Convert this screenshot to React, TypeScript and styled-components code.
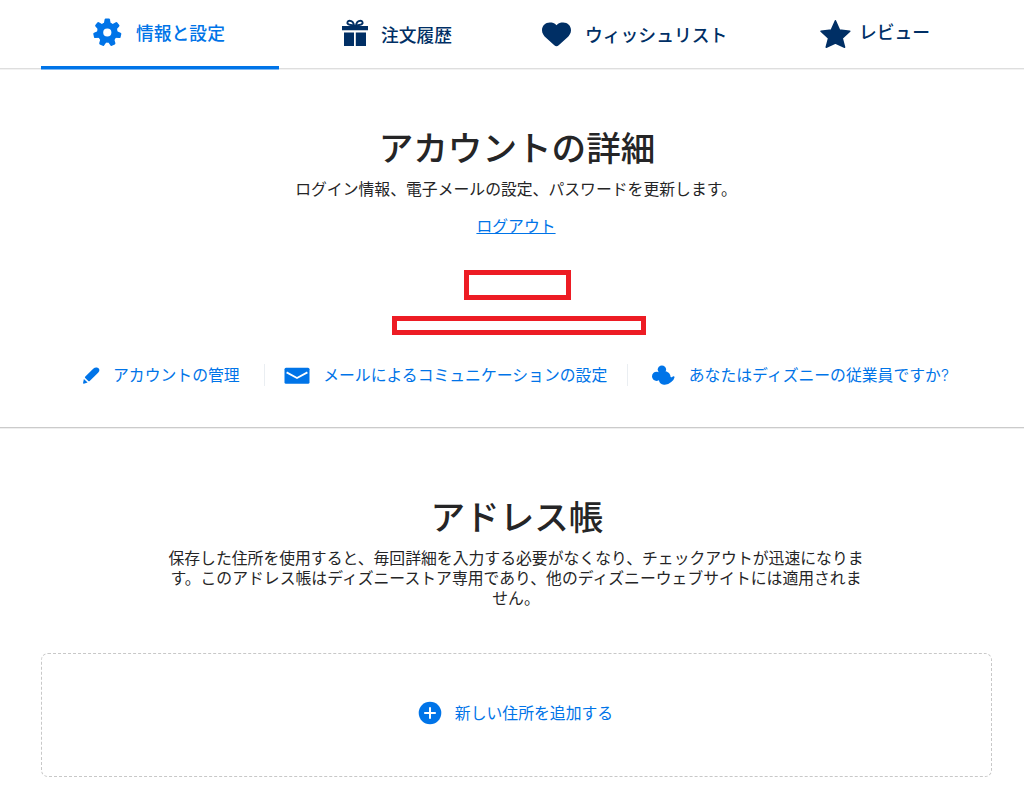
import styled, { createGlobalStyle } from 'styled-components'

const GlobalStyle = createGlobalStyle`
  * {
    box-sizing: border-box;
  }

  body {
    margin: 0;
    background: #fff;
    color: #252526;
    font-family: 'Noto Sans CJK JP', sans-serif;
    font-size: 15.84px;
  }
`

const Page = styled.div`
  width: 1024px;
  height: 799px;
  overflow: hidden;
`

const Nav = styled.nav`
  display: grid;
  grid-template-columns: repeat(4, 238px);
  height: 69px;
  padding-left: 41px;
  border-bottom: 1px solid #dedede;
  box-shadow: 0 1px #f2f2f2;
`

const Tab = styled.a<{ $active?: boolean; $indent: number; $gap: number }>`
  display: flex;
  align-items: flex-start;
  gap: ${props => props.$gap}px;
  height: 69px;
  padding-left: ${props => props.$indent}px;
  border-bottom: ${props => (props.$active ? '3px solid #0074e8' : 'none')};
  box-shadow: ${props => (props.$active ? '0 1px #7fb9f3' : 'none')};
  color: ${props => (props.$active ? '#0074e8' : '#002f65')};
  font-size: 17.8px;
  font-weight: 500;
  white-space: nowrap;

  svg {
    flex: none;
    margin-top: 18px;
  }
`

const TabLabel = styled.span<{ $top: number }>`
  margin-top: ${props => props.$top}px;
  line-height: 24px;
`

const Account = styled.section`
  display: flex;
  flex-direction: column;
  align-items: center;
  height: 359px;
  padding: 56px 33px 0 41px;
  border-bottom: 1px solid #cbcbcb;
  box-shadow: 0 1px #efefef;
`

const Title = styled.h1`
  margin: 0 0 0 2px;
  font-size: 34.6px;
  font-weight: 500;
  line-height: 42px;
`

const Text = styled.p`
  width: 706px;
  margin: 12px 0 0;
  line-height: 20px;
  text-align: center;
`

const Logout = styled.a`
  margin-top: 17px;
  color: #0074e8;
  line-height: 20px;
  text-decoration: underline;
`

const Redacted = styled.div<{ $width: number; $height: number; $top: number; $left: number }>`
  width: ${props => props.$width}px;
  height: ${props => props.$height}px;
  margin-top: ${props => props.$top}px;
  margin-left: ${props => props.$left}px;
  border: 5px solid #ed1c24;
`

const Links = styled.div`
  display: flex;
  align-items: center;
  align-self: flex-start;
  height: 22px;
  margin-top: 29px;
  margin-left: 41px;
`

const Link = styled.a<{ $gap: number }>`
  display: flex;
  align-items: center;
  gap: ${props => props.$gap}px;
  color: #0074e8;
  line-height: 20px;
  white-space: nowrap;

  svg {
    flex: none;
  }
`

const Latin = styled.span`
  font-family: Inter, sans-serif;
  font-weight: 300;
`

const Separator = styled.span<{ $before: number; $after: number }>`
  width: 1px;
  height: 22px;
  margin: 0 ${props => props.$after}px 0 ${props => props.$before}px;
  background: #eaeef2;
`

const AddressBook = styled.section`
  display: flex;
  flex-direction: column;
  align-items: center;
  padding: 66px 33px 0 41px;
`

const AddAddress = styled.div`
  display: flex;
  align-items: center;
  justify-content: center;
  width: 951px;
  height: 124px;
  margin-top: 45px;
  margin-left: 1px;
  padding-right: 2px;
  padding-bottom: 4px;
  border: 1px dashed #c8c8c8;
  border-radius: 7px;
`

const toothAngles = [0, 1, 2, 3, 4, 5, 6].map(i => (i * 360) / 7)

const GearIcon = () => (
  <svg width="30" height="30" viewBox="-15.3 -14.5 30 30" fill="currentColor">
    {toothAngles.map(angle => (
      <path key={angle} d="M-3.6-8L-2.7-13Q-2.5-14-1.6-14H1.6Q2.5-14 2.7-13L3.6-8Z" transform={`rotate(${angle})`} />
    ))}
    <path fillRule="evenodd" d="M0-10.3A10.3 10.3 0 1 1 0 10.3A10.3 10.3 0 1 1 0-10.3ZM0-4.1A4.1 4.1 0 1 0 0 4.1A4.1 4.1 0 1 0 0-4.1Z" />
  </svg>
)

const GiftIcon = () => (
  <svg width="26" height="30" viewBox="0 0 26 30" fill="currentColor">
    <path d="M0 8H26V12.3H0ZM2 14.6H12V28H2ZM13.8 14.6H24V28H13.8Z" />
    <path
      d="M12.2 8C11.7 4.8 9.9 2.7 7.5 2.7C5.5 2.7 4.7 5 6 6.1C7.6 7.5 10.2 6.5 12.2 8ZM13.8 8C14.3 4.8 16.1 2.7 18.5 2.7C20.5 2.7 21.3 5 20 6.1C18.4 7.5 15.8 6.5 13.8 8Z"
      fill="none"
      stroke="currentColor"
      strokeWidth="1.9"
    />
  </svg>
)

const HeartIcon = () => (
  <svg width="30" height="30" viewBox="-.5 0 30 30" fill="currentColor">
    <path d="M15 7.2C17 4.8 19.2 4.6 21.6 4.6C26.2 4.6 29.5 8 29.5 12.2C29.5 15.2 27.8 17.6 25.5 19.8L17.2 27.3Q15 29.2 12.8 27.3L4.5 19.8C2.2 17.6.5 15.2.5 12.2C.5 8 3.8 4.6 8.4 4.6C10.8 4.6 13 4.8 15 7.2Z" />
  </svg>
)

const StarIcon = () => (
  <svg width="32" height="32" viewBox="-.4 0 32 32" fill="currentColor" stroke="currentColor" strokeWidth="1.5" strokeLinejoin="round">
    <path d="M16 2.8L20 11.9L30.4 13.2L22.8 20.2L25.2 29.3L16 25L6.8 29.3L9.2 20.2L1.6 13.2L12 11.9Z" />
  </svg>
)

const PencilIcon = () => (
  <svg width="18" height="18" viewBox="-.4 -.8 18 18" fill="currentColor">
    <path d="M2.7 10L10.8 2Q12.8.2 14.6.7Q16.6 1 17 3Q17.2 4.4 15.7 5.9L7.3 14.1Q6.5 14.9 5.9 14.1L2.8 11.2Q2.2 10.6 2.7 10ZM1.5 12.1L5.2 15.8L1.4 16.9Q.6 17 .7 16Z" />
  </svg>
)

const MailIcon = () => (
  <svg width="26" height="18" viewBox="0 -.8 26 18">
    <rect x=".5" y="1" width="25" height="16" rx="1.5" fill="currentColor" />
    <path d="M2.6 5.6L13 11.2L23.4 5.6" fill="none" stroke="#fff" strokeWidth="1.8" />
  </svg>
)

const MickeyIcon = () => (
  <svg width="24" height="22" viewBox=".6 -.3 24 22" fill="currentColor">
    <circle cx="10.5" cy="5.3" r="4.2" />
    <circle cx="5.2" cy="12" r="4.6" />
    <path d="M8 7.2Q14.5 5.6 17.6 8.6Q19.2 10.6 19.2 12.6Q20.8 13.6 21.3 12.2Q23.2 11.4 23.1 13.2Q22.5 16 19.8 17.6Q16.2 20.9 12.5 20.4Q8 20 7.4 15.3L6 10Z" />
  </svg>
)

const PlusIcon = () => (
  <svg width="24" height="24" viewBox="0 0 24 24">
    <circle cx="12" cy="12" r="11.3" fill="currentColor" />
    <path d="M12 6.2V17.8M6.2 12H17.8" stroke="#fff" strokeWidth="2" />
  </svg>
)

const App = () => {
  return (
    <Page>
      <GlobalStyle />
      <Nav>
        <Tab $active $indent={51} $gap={14}>
          <GearIcon />
          <TabLabel $top={20}>情報と設定</TabLabel>
        </Tab>
        <Tab $indent={63} $gap={13}>
          <GiftIcon />
          <TabLabel $top={22}>注文履歴</TabLabel>
        </Tab>
        <Tab $indent={24} $gap={14}>
          <HeartIcon />
          <TabLabel $top={22}>ウィッシュリスト</TabLabel>
        </Tab>
        <Tab $indent={64} $gap={8}>
          <StarIcon />
          <TabLabel $top={19}>レビュー</TabLabel>
        </Tab>
      </Nav>

      <Account>
        <Title>アカウントの詳細</Title>
        <Text>ログイン情報、電子メールの設定、パスワードを更新します。</Text>
        <Logout>ログアウト</Logout>
        <Redacted $width={107} $height={30} $top={34} $left={3} />
        <Redacted $width={254} $height={19} $top={16} $left={6} />
        <Links>
          <Link $gap={13}>
            <PencilIcon />
            アカウントの管理
          </Link>
          <Separator $before={24} $after={19} />
          <Link $gap={13.5}>
            <MailIcon />
            メールによるコミュニケーションの設定
          </Link>
          <Separator $before={20} $after={23.5} />
          <Link $gap={13}>
            <MickeyIcon />
            <span>
              あなたはディズニーの従業員ですか<Latin>?</Latin>
            </span>
          </Link>
        </Links>
      </Account>

      <AddressBook>
        <Title>アドレス帳</Title>
        <Text>
          保存した住所を使用すると、毎回詳細を入力する必要がなくなり、チェックアウトが迅速になります。このアドレス帳はディズニーストア専用であり、他のディズニーウェブサイトには適用されません。
        </Text>
        <AddAddress>
          <Link $gap={13}>
            <PlusIcon />
            新しい住所を追加する
          </Link>
        </AddAddress>
      </AddressBook>
    </Page>
  )
}

export default App
